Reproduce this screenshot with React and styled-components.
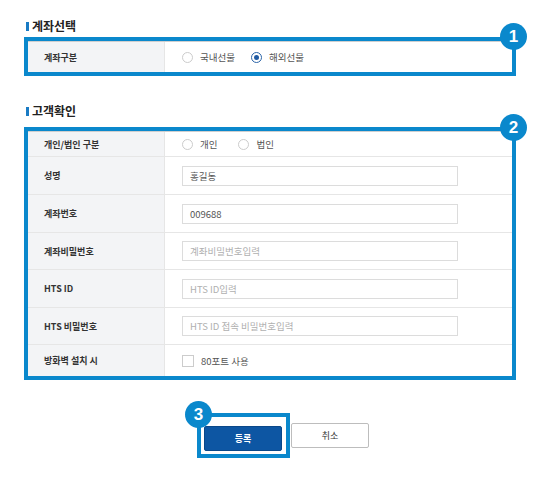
import React from 'react';
import styled, { createGlobalStyle } from 'styled-components';

const GlobalStyle = createGlobalStyle`
  body {
    margin: 0;
    background: #fff;
    font-family: "Noto Sans CJK KR", "Noto Sans", sans-serif;
  }
`;

const Page = styled.div`
  width: 540px;
  height: 486px;
  box-sizing: border-box;
  padding: 18px 0 0 24px;
`;

const SectionTitle = styled.h2`
  display: flex;
  align-items: center;
  gap: 3px;
  height: 16px;
  margin: ${p => p.$mt || 0}px 0 ${p => p.$mb || 0}px 2px;
  font-size: 12px;
  font-weight: bold;
  color: #222;
  line-height: 16px;
  &::before {
    content: '';
    width: 3px;
    height: 9px;
    background: #1a7bc4;
  }
`;

const Highlight = styled.div`
  position: relative;
  width: 492px;
  box-sizing: border-box;
  border: 4px solid #0a88cc;
`;

const Badge = styled.span`
  position: absolute;
  top: ${p => p.$top}px;
  ${p => (p.$right !== undefined ? `right: ${p.$right}px;` : `left: ${p.$left}px;`)}
  width: 27px;
  height: 27px;
  border-radius: 50%;
  background: #0a88cc;
  color: #fff;
  font-family: "Liberation Sans", Arial, sans-serif;
  font-weight: bold;
  font-size: 17px;
  display: flex;
  align-items: center;
  justify-content: center;
  z-index: 2;
`;

const Table = styled.div`
  border-top: 1px solid #cfcfcf;
`;

const Row = styled.div`
  display: flex;
  height: ${p => p.$h}px;
  box-sizing: border-box;
  border-bottom: ${p => (p.$last ? 'none' : '1px solid #e6e6e6')};
`;

const Label = styled.div`
  width: 137px;
  flex-shrink: 0;
  box-sizing: border-box;
  padding-left: 16px;
  display: flex;
  align-items: center;
  background: #f3f4f6;
  border-right: 1px solid #e6e6e6;
  font-size: 9px;
  font-weight: bold;
  color: #333;
`;

const Value = styled.div`
  flex: 1;
  display: flex;
  align-items: center;
  padding-left: 17px;
  gap: ${p => p.$gap || 0}px;
  font-size: 9.5px;
  color: #555;
`;

const Option = styled.label`
  display: flex;
  align-items: center;
  gap: 7px;
`;

const RadioCircle = styled.span`
  width: 11px;
  height: 11px;
  box-sizing: border-box;
  border-radius: 50%;
  border: 1px solid ${p => (p.$checked ? '#2a64a8' : '#cccccc')};
  background: #fff;
  display: flex;
  align-items: center;
  justify-content: center;
  &::after {
    content: '';
    display: ${p => (p.$checked ? 'block' : 'none')};
    width: 5px;
    height: 5px;
    border-radius: 50%;
    background: #1f5aa3;
  }
`;

const CheckBox = styled.span`
  width: 12px;
  height: 12px;
  box-sizing: border-box;
  border: 1px solid #cccccc;
  background: #fff;
`;

const Field = styled.div`
  width: 276px;
  height: 20px;
  box-sizing: border-box;
  border: 1px solid #dcdcdc;
  display: flex;
  align-items: center;
  padding-left: 7px;
  font-size: 9.5px;
  color: ${p => (p.$placeholder ? '#b0b0b0' : '#555')};
`;

const ButtonRow = styled.div`
  display: flex;
  align-items: center;
  margin-top: 33px;
  padding-left: 173px;
`;

const ButtonFrame = styled.div`
  position: relative;
  padding: 6px 4px 3px 3px;
  border: 4px solid #0a88cc;
`;

const Button = styled.button`
  width: 78px;
  height: 25px;
  box-sizing: border-box;
  margin: 0;
  padding: 0;
  border-radius: 2px;
  font-family: "Noto Sans CJK KR", "Noto Sans", sans-serif;
  font-size: 9px;
  font-weight: ${p => (p.$primary ? 'bold' : 'normal')};
  color: ${p => (p.$primary ? '#fff' : '#333')};
  background: ${p => (p.$primary ? '#0d56a3' : '#fff')};
  border: 1px solid ${p => (p.$primary ? '#0a4889' : '#bdbdbd')};
  margin-left: ${p => p.$ml || 0}px;
`;

function Radio({ checked, children }) {
  return (
    <Option>
      <RadioCircle $checked={checked} />
      {children}
    </Option>
  );
}

function App() {
  return (
    <Page>
      <GlobalStyle />
      <SectionTitle $mb={3}>계좌선택</SectionTitle>
      <Highlight>
        <Badge $top={-18} $right={-15}>1</Badge>
        <Table>
          <Row $h={30} $last>
            <Label>계좌구분</Label>
            <Value $gap={16}>
              <Radio>국내선물</Radio>
              <Radio checked>해외선물</Radio>
            </Value>
          </Row>
        </Table>
      </Highlight>

      <SectionTitle $mt={27} $mb={8}>고객확인</SectionTitle>
      <Highlight>
        <Badge $top={-17} $right={-15}>2</Badge>
        <Table>
          <Row $h={25}>
            <Label>개인/법인 구분</Label>
            <Value $gap={21}>
              <Radio>개인</Radio>
              <Radio>법인</Radio>
            </Value>
          </Row>
          <Row $h={38}>
            <Label>성명</Label>
            <Value><Field>홍길동</Field></Value>
          </Row>
          <Row $h={38}>
            <Label>계좌번호</Label>
            <Value><Field>009688</Field></Value>
          </Row>
          <Row $h={37}>
            <Label>계좌비밀번호</Label>
            <Value><Field $placeholder>계좌비밀번호입력</Field></Value>
          </Row>
          <Row $h={38}>
            <Label>HTS ID</Label>
            <Value><Field $placeholder>HTS ID입력</Field></Value>
          </Row>
          <Row $h={37}>
            <Label>HTS 비밀번호</Label>
            <Value><Field $placeholder>HTS ID 접속 비밀번호입력</Field></Value>
          </Row>
          <Row $h={31} $last>
            <Label>방화벽 설치 시</Label>
            <Value>
              <Option>
                <CheckBox />
                80포트 사용
              </Option>
            </Value>
          </Row>
        </Table>
      </Highlight>

      <ButtonRow>
        <ButtonFrame>
          <Badge $top={-16} $left={-16}>3</Badge>
          <Button $primary>등록</Button>
        </ButtonFrame>
        <Button $ml={1}>취소</Button>
      </ButtonRow>
    </Page>
  );
}

export default App;
